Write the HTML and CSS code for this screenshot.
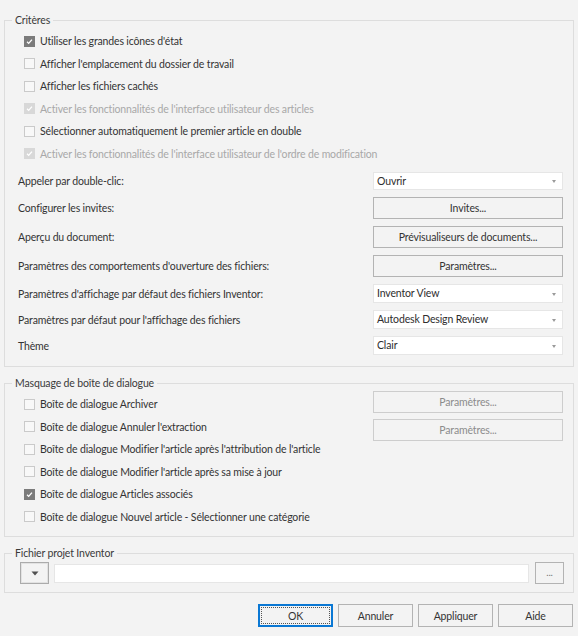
FILE: index.html
```html
<!DOCTYPE html>
<html lang="fr">
<head>
<meta charset="utf-8">
<title>Options</title>
<link rel="stylesheet" href="styles.css">
</head>
<body>
<div class="dialog">
  <fieldset class="group">
    <legend>Critères</legend>
    <div class="group-body criteria">
      <div class="checks">
        <div class="check is-checked"><span class="box"><svg viewBox="0 0 11 11"><polyline points="2.5,5.8 4.5,7.8 8.5,3.2"/></svg></span>Utiliser les grandes icônes d'état</div>
        <div class="check"><span class="box"></span>Afficher l'emplacement du dossier de travail</div>
        <div class="check"><span class="box"></span>Afficher les fichiers cachés</div>
        <div class="check is-checked is-disabled"><span class="box"><svg viewBox="0 0 11 11"><polyline points="2.5,5.8 4.5,7.8 8.5,3.2"/></svg></span>Activer les fonctionnalités de l'interface utilisateur des articles</div>
        <div class="check"><span class="box"></span>Sélectionner automatiquement le premier article en double</div>
        <div class="check is-checked is-disabled"><span class="box"><svg viewBox="0 0 11 11"><polyline points="2.5,5.8 4.5,7.8 8.5,3.2"/></svg></span>Activer les fonctionnalités de l'interface utilisateur de l'ordre de modification</div>
      </div>
      <div class="settings">
        <div class="setting"><span class="setting-label">Appeler par double-clic:</span><div class="combo">Ouvrir<span class="combo-arrow"></span></div></div>
        <div class="setting"><span class="setting-label">Configurer les invites:</span><div class="btn btn-wide">Invites...</div></div>
        <div class="setting"><span class="setting-label">Aperçu du document:</span><div class="btn btn-wide">Prévisualiseurs de documents...</div></div>
        <div class="setting"><span class="setting-label">Paramètres des comportements d'ouverture des fichiers:</span><div class="btn btn-wide">Paramètres...</div></div>
        <div class="setting"><span class="setting-label">Paramètres d'affichage par défaut des fichiers Inventor:</span><div class="combo combo-low">Inventor View<span class="combo-arrow"></span></div></div>
        <div class="setting"><span class="setting-label">Paramètres par défaut pour l'affichage des fichiers</span><div class="combo combo-low">Autodesk Design Review<span class="combo-arrow"></span></div></div>
        <div class="setting"><span class="setting-label">Thème</span><div class="combo combo-low">Clair<span class="combo-arrow"></span></div></div>
      </div>
    </div>
  </fieldset>

  <fieldset class="group">
    <legend>Masquage de boîte de dialogue</legend>
    <div class="group-body masking">
      <div class="checks">
        <div class="check"><span class="box"></span>Boîte de dialogue Archiver</div>
        <div class="check"><span class="box"></span>Boîte de dialogue Annuler l'extraction</div>
        <div class="check"><span class="box"></span>Boîte de dialogue Modifier l'article après l'attribution de l'article</div>
        <div class="check"><span class="box"></span>Boîte de dialogue Modifier l'article après sa mise à jour</div>
        <div class="check is-checked"><span class="box"><svg viewBox="0 0 11 11"><polyline points="2.5,5.8 4.5,7.8 8.5,3.2"/></svg></span>Boîte de dialogue Articles associés</div>
        <div class="check"><span class="box"></span>Boîte de dialogue Nouvel article - Sélectionner une catégorie</div>
      </div>
      <div class="side-buttons">
        <div class="btn btn-wide btn-disabled">Paramètres...</div>
        <div class="btn btn-wide btn-disabled">Paramètres...</div>
      </div>
    </div>
  </fieldset>

  <fieldset class="group group-project">
    <legend>Fichier projet Inventor</legend>
    <div class="group-body project">
      <div class="btn btn-square btn-drop"><svg viewBox="0 0 8 5"><polygon points="0.5,0.5 7.5,0.5 4,4.5"/></svg></div>
      <div class="path-input"></div>
      <div class="btn btn-square btn-browse">...</div>
    </div>
  </fieldset>

  <div class="footer">
    <div class="btn btn-footer btn-default"><span class="focus-ring">OK</span></div>
    <div class="btn btn-footer">Annuler</div>
    <div class="btn btn-footer">Appliquer</div>
    <div class="btn btn-footer">Aide</div>
  </div>
</div>
</body>
</html>
```

FILE: styles.css
```css
* { box-sizing: border-box; }
html, body { margin: 0; padding: 0; }
body {
  width: 578px;
  height: 636px;
  overflow: hidden;
  background: #f3f3f3;
  font-family: Lato, "Open Sans", sans-serif;
  font-size: 10.5px;
  letter-spacing: -0.15px;
  color: #333333;
}
.dialog {
  padding: 12px 4px 0 4px;
}
.group {
  margin: 0;
  padding: 0;
  min-width: 0;
  border: 1px solid #dddddd;
}
.group + .group { margin-top: 8px; }
.group-project { margin-top: 7px; }
.group legend {
  margin-left: 7px;
  padding: 0 3px;
  height: 16px;
  line-height: 16px;
  color: #3a3a3a;
}
.group-body { display: flex; }

/* checkboxes */
.checks { padding-left: 19px; padding-top: 2px; }
.check {
  height: 22.5px;
  display: flex;
  align-items: center;
  white-space: nowrap;
}
.box {
  width: 11px;
  height: 11px;
  margin-right: 5px;
  border: 1px solid #cacaca;
  background: #f8f8f8;
  flex: none;
  display: flex;
}
.box svg { width: 9px; height: 9px; }
.box polyline { fill: none; stroke: #ffffff; stroke-width: 1.6; }
.is-checked .box { background: #7b7b7b; border-color: #7b7b7b; }
.is-disabled { color: #a8a8a8; }
.is-disabled .box { background: #d8d8d8; border-color: #d8d8d8; }

/* criteria settings */
.criteria {
  flex-direction: column;
  padding: 0 10px 11px 13px;
}
.criteria .checks { padding-left: 6px; }
.settings {
  margin-top: 7px;
  display: flex;
  flex-direction: column;
  gap: 7px;
}
.setting {
  display: flex;
  justify-content: space-between;
  align-items: center;
}
.combo {
  position: relative;
  width: 190px;
  height: 18px;
  line-height: 16px;
  padding-left: 3px;
  background: #ffffff;
  border: 1px solid #e6e6e6;
  color: #2e2e2e;
}
.combo-low { height: 19px; line-height: 17px; }
.combo-arrow {
  position: absolute;
  right: 6px;
  top: 50%;
  margin-top: -1px;
  border-left: 2.5px solid transparent;
  border-right: 2.5px solid transparent;
  border-top: 3px solid #9a9a9a;
}

/* buttons */
.btn {
  display: flex;
  align-items: center;
  justify-content: center;
  border: 1px solid #b3b3b3;
  background: #f3f3f3;
  color: #333333;
  white-space: nowrap;
}
.btn-wide { width: 190px; height: 22px; }
.btn-disabled { border-color: #cdcdcd; color: #8c8c8c; }

/* masking group */
.masking {
  justify-content: space-between;
  padding: 0 10px 8px 0;
}
.side-buttons {
  display: flex;
  flex-direction: column;
  gap: 6px;
}

/* project group */
.project {
  align-items: center;
  padding: 1px 9px 8px 15px;
  gap: 5px;
}
.btn-square { width: 29px; height: 22px; flex: none; }
.btn-drop { border: 1px solid #ababab; box-shadow: inset 0 0 0 1px #e2e2e2; }
.btn-drop svg { width: 8px; height: 5px; }
.btn-drop polygon { fill: #505050; }
.btn-browse { margin-left: 1px; color: #777777; font-size: 10px; padding-bottom: 3px; }
.path-input {
  flex: 1;
  height: 19px;
  background: #ffffff;
  border: 1px solid #e6e6e6;
}

/* footer */
.footer {
  margin-top: 11px;
  padding-right: 1px;
  display: flex;
  justify-content: flex-end;
  gap: 5px;
}
.btn-footer { width: 75px; height: 23px; }
.btn-default {
  border: 2px solid #0a78d4;
  padding: 1px;
}
.focus-ring {
  width: 100%;
  height: 100%;
  border: 1px dotted #555555;
  display: flex;
  align-items: center;
  justify-content: center;
}
```
